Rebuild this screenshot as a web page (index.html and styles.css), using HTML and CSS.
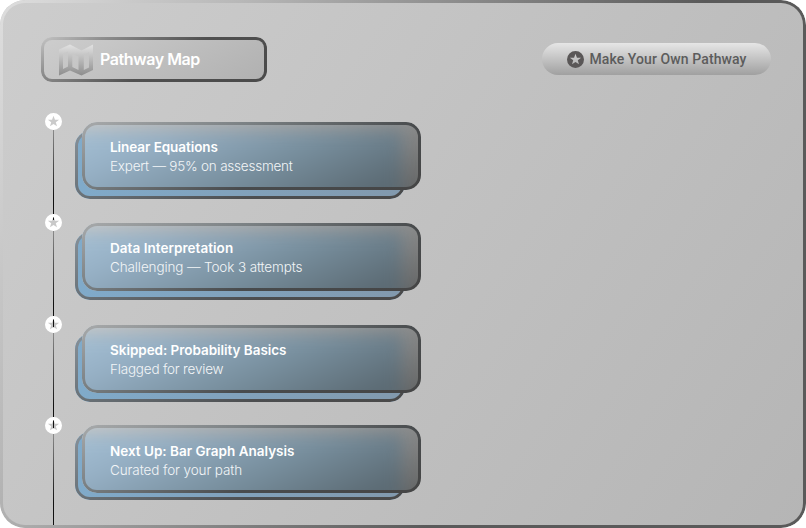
FILE: index.html
```
<!DOCTYPE html>
<html lang="en">
<head>
<meta charset="utf-8">
<title>Pathway Map</title>
<link rel="stylesheet" href="styles.css">
</head>
<body>
<svg class="defs" width="0" height="0" aria-hidden="true">
  <defs>
    <linearGradient id="mapfill" x1="0" y1="0" x2="0" y2="1"><stop offset="0" stop-color="#e2e2e2"/><stop offset="1" stop-color="#8d8d8d"/></linearGradient>
    <symbol id="badge" viewBox="0 0 20 20"><path fill="currentColor" fill-rule="evenodd" d="M10 0a10 10 0 1 0 0 20a10 10 0 1 0 0-20zM10 3.2L11.7 7.8H16.6L12.7 10.8L14.1 15.700L10 12.8L5.900 15.700L7.300 10.8L3.400 7.8H8.300z"/></symbol>
  </defs>
</svg>
<main class="panel ring">
  <header class="top">
    <div class="title ring">
      <svg class="map" viewBox="0 0 34 32"><path fill="url(#mapfill)" fill-rule="evenodd" d="M0 5.5L11 .5L22.500 6.500L34 .5V26L22.500 31.500L11 26.500L0 31.500zM4 9.500V25L9 22.500V7.500zM13.300 9.500V23L19.500 26V12.500zM24.800 11V26L30 23.500V8z"/></svg>
      <h1>Pathway Map</h1>
    </div>
    <button class="make"><svg class="make-icon"><use href="#badge"/></svg><span>Make Your Own Pathway</span></button>
  </header>
  <ol class="path">
    <li class="step"><div class="rail"><i class="line"></i><svg class="node"><use href="#badge"/></svg></div><div class="stack"><div class="back ring"></div><article class="card ring"><h2 class="t1">Linear Equations</h2><p class="p1">Expert — 95% on assessment</p></article></div></li>
    <li class="step"><div class="rail"><i class="line"></i><svg class="node"><use href="#badge"/></svg></div><div class="stack"><div class="back ring"></div><article class="card ring"><h2 class="t2">Data Interpretation</h2><p class="p2">Challenging — Took 3 attempts</p></article></div></li>
    <li class="step"><div class="rail"><i class="line"></i><svg class="node"><use href="#badge"/></svg></div><div class="stack"><div class="back ring"></div><article class="card ring"><h2 class="t3">Skipped: Probability Basics</h2><p class="p3">Flagged for review</p></article></div></li>
    <li class="step"><div class="rail"><i class="line"></i><svg class="node"><use href="#badge"/></svg></div><div class="stack"><div class="back ring"></div><article class="card ring"><h2 class="t4">Next Up: Bar Graph Analysis</h2><p class="p4">Curated for your path</p></article></div></li>
  </ol>
</main>
</body>
</html>
```
FILE: styles.css
```
* { box-sizing: border-box; margin: 0; padding: 0; }
html, body { width: 806px; height: 528px; overflow: hidden; background: #fff; }
body { font-family: Inter, "Liberation Sans", sans-serif; }
.defs { position: absolute; }

/* Gradient outline that follows the rounded corners */
.ring { position: relative; }
.ring::before {
  content: ""; position: absolute; inset: 0; padding: 3px; border-radius: inherit;
  background: var(--edge); pointer-events: none;
  -webkit-mask: linear-gradient(#000 0 0) content-box, linear-gradient(#000 0 0);
  -webkit-mask-composite: xor;
  mask-composite: exclude;
}
.panel {
  --edge: linear-gradient(118deg, #dedede 0%, #b8b8b8 22%, #5a5a5a 65%, #5a5a5a 100%);
  width: 806px; height: 528px; border-radius: 25px; overflow: hidden;
  background: linear-gradient(125deg, #cdcdcd, #b5b5b5);
}
.top { display: flex; justify-content: space-between; align-items: flex-start; padding: 37px 35px 0 41px; height: 112px; }
.title {
  --edge: linear-gradient(150deg, #c4c4c4 0%, #8c8c8c 22%, #505050 55%, #4a4a4a 100%);
  display: flex; align-items: center; width: 226px; height: 45px; padding-left: 18px; border-radius: 11px;
  background: linear-gradient(150deg, #cecece, #b0b0b0);
}
.map { width: 34px; height: 32px; }
h1 { margin: 0 0 1px 7px; font-size: 16px; line-height: 22px; font-weight: 600; color: #fff; white-space: nowrap; letter-spacing: -.42px; }
.make {
  display: flex; align-items: center; justify-content: center; gap: 5px; width: 229px; height: 32px; margin-top: 6px; padding-left: 1px;
  border: 0; border-radius: 16px; background: linear-gradient(#e6e6e6, #a0a0a0); color: #5c5c5c;
  font: 500 14px/20px Roboto, sans-serif; letter-spacing: .1px; white-space: nowrap;
}
.make-icon { width: 17px; height: 17px; color: #5a5757; }
.path { list-style: none; display: grid; grid-template-rows: repeat(4, 101.5px); padding: .5px 0 0 45px; }
.step { display: flex; gap: 13px; }
.rail { display: flex; flex-direction: column; width: 17px; position: relative; }
.line { position: absolute; left: 8px; top: 17px; width: 1px; height: 97px; background: linear-gradient(#8a8a8a, #111 75%); }
.step:first-child .line { height: 90px; }
.step:last-child .line { height: 91px; }
.node { position: relative; width: 17px; height: 17px; color: #fff; flex: none; }
.stack { display: grid; width: 346px; height: 80px; margin-top: 9.5px; }
.stack > * { grid-area: 1 / 1; height: 68px; border-radius: 15px; }
.back {
  --edge: linear-gradient(160deg, #879199 0%, #6a7278 35%, #4c4e50 70%, #494949 100%);
  width: 330px; margin-top: 9px; background: linear-gradient(100deg, #80abcb, #8299ad);
}
.step:nth-child(2) .stack { margin-top: 9px; }
.step:last-child .stack { margin-top: 8px; }
.step:last-child .back { margin-top: 7px; }
.card {
  --edge: linear-gradient(160deg, #a8aaab 0%, #7b8184 32%, #484b4d 65%, #454545 100%);
  width: 339px; margin-left: 7px; padding: 15px 0 0 28px;
  background: linear-gradient(160deg, #c6c8c9, #9a9b9b 50%, #6a6b6b 95%);
  isolation: isolate; overflow: hidden; color: #fff; white-space: nowrap;
}
/* Frosted blue of the sheet behind */
.card::after {
  content: ""; position: absolute; z-index: -1; inset: 9px 19px -16px -16px;
  background: linear-gradient(155deg, #a6c1d5, #97b1c6 22%, #788f9e 55%, #5b6a73 88%);
  filter: blur(8px);
}
h2 { font-size: 13.5px; line-height: 20px; font-weight: 600; }
p { font-size: 13.5px; line-height: 18.5px; font-weight: 300; color: #f2f5f7; }
.step:last-child .card { padding-top: 16px; }
.t1 { letter-spacing: -.06px; }
.t2 { letter-spacing: .04px; }
.t3 { letter-spacing: -.04px; }
.p1 { letter-spacing: -.22px; }
.p2 { letter-spacing: -.12px; }
.p3 { letter-spacing: -.2px; }
.p4 { letter-spacing: -.1px; }
```
